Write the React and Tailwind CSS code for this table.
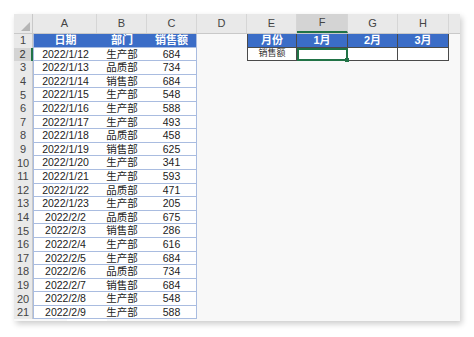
import React from "react";

const rows = [
  ["2022/1/12", "生产部", 684],
  ["2022/1/13", "品质部", 734],
  ["2022/1/14", "销售部", 684],
  ["2022/1/15", "生产部", 548],
  ["2022/1/16", "生产部", 588],
  ["2022/1/17", "生产部", 493],
  ["2022/1/18", "品质部", 458],
  ["2022/1/19", "销售部", 625],
  ["2022/1/20", "生产部", 341],
  ["2022/1/21", "生产部", 593],
  ["2022/1/22", "品质部", 471],
  ["2022/1/23", "生产部", 205],
  ["2022/2/2", "品质部", 675],
  ["2022/2/3", "销售部", 286],
  ["2022/2/4", "生产部", 616],
  ["2022/2/5", "生产部", 684],
  ["2022/2/6", "品质部", 734],
  ["2022/2/7", "销售部", 684],
  ["2022/2/8", "生产部", 548],
  ["2022/2/9", "生产部", 588],
];

const grid =
  "grid grid-cols-[19px_64px_50px_50px_50px_50px_51px_50px_51px_1fr] grid-rows-[100%]";
const center = "flex items-center justify-center overflow-hidden";
const rowNum = `${center} bg-[#e9e9e9] border-r border-[#c9c9c9] text-[11px] text-[#444]`;
const blue = `${center} bg-[#3b6dc7] text-white font-bold text-[11px] border-b border-[#4a4a4a]`;
const dataCell = `${center} bg-white border-b border-[#a9bce0] text-[10.5px] text-[#222]`;

export default function App() {
  const letters = ["A", "B", "C", "D", "E", "F", "G", "H"];

  return (
    <div className="w-[474px] h-[337px] bg-white pt-[14px] pl-[14px] leading-none font-['Liberation_Sans','Noto_Sans_CJK_SC',sans-serif]">
      <div className="relative w-[446px] h-[307px] bg-[#f8f8f8] shadow-[2px_3px_6px_rgba(0,0,0,0.2)] overflow-hidden">
        {/* column letters */}
        <div className={`${grid} h-[20px] bg-[#e9e9e9] border-b border-[#c9c9c9]`}>
          <div className="relative border-r border-[#c9c9c9]">
            <div className="absolute right-[2px] bottom-[2px] w-0 h-0 border-l-[9px] border-l-transparent border-b-[9px] border-b-[#b5b5b5]" />
          </div>
          {letters.map((l) => (
            <div
              key={l}
              className={`${center} text-[11px] text-[#444] border-r border-[#d6d6d6] ${
                l === "F" ? "bg-[#d4d4d4] border-b-2 border-b-[#217346]" : ""
              }`}
            >
              {l}
            </div>
          ))}
          <div />
        </div>

        {/* row 1 */}
        <div className={`${grid} h-[13.6px]`}>
          <div className={rowNum}>1</div>
          <div className={`${blue} border-l border-l-[#a9bce0] border-b-[#a9bce0]`}>日期</div>
          <div className={`${blue} border-b-[#a9bce0]`}>部门</div>
          <div className={`${blue} border-r border-r-[#a9bce0] border-b-[#a9bce0]`}>销售额</div>
          <div />
          <div className={`${blue} border-l border-r`}>月份</div>
          <div className={`${blue} border-r`}>1月</div>
          <div className={`${blue} border-r`}>2月</div>
          <div className={`${blue} border-r`}>3月</div>
          <div />
        </div>

        {rows.map(([date, dept, amt], i) => {
          const n = i + 2;
          return (
            <div key={n} className={`${grid} h-[13.6px]`}>
              <div
                className={
                  n === 2
                    ? `${center} bg-[#d4d4d4] border-r-2 border-[#217346] text-[11px] text-[#333]`
                    : rowNum
                }
              >
                {n}
              </div>
              <div className={`${dataCell} border-l border-l-[#a9bce0]`}>{date}</div>
              <div className={dataCell}>{dept}</div>
              <div className={`${dataCell} border-r border-r-[#a9bce0]`}>{amt}</div>
              <div />
              {n === 2 ? (
                <>
                  <div className={`${center} bg-white border-l border-r border-b border-[#4a4a4a] text-[9px] text-[#333]`}>
                    销售额
                  </div>
                  <div className="relative bg-white border-2 border-[#217346]">
                    <div className="absolute -right-[3px] -bottom-[3px] w-[4px] h-[4px] bg-[#217346]" />
                  </div>
                  <div className="bg-white border-r border-b border-[#4a4a4a]" />
                  <div className="bg-white border-r border-b border-[#4a4a4a]" />
                </>
              ) : (
                <>
                  <div />
                  <div />
                  <div />
                  <div />
                </>
              )}
              <div />
            </div>
          );
        })}

        {/* scrollbar thumb */}
        <div className="absolute left-[53px] bottom-0 w-[40px] h-[2px] bg-white" />
      </div>
    </div>
  );
}
